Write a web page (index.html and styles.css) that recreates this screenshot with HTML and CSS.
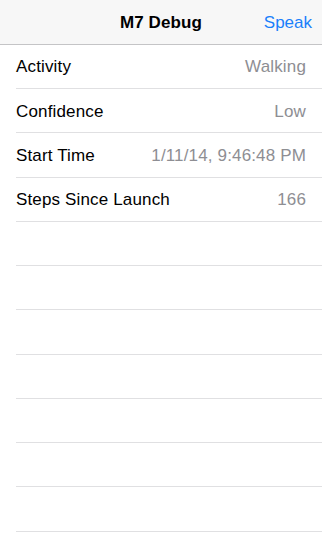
FILE: index.html
```html
<!DOCTYPE html>
<html>
<head>
<meta charset="utf-8">
<link rel="stylesheet" href="styles.css">
</head>
<body>
<div class="screen">
  <header class="navbar">
    <div class="nav-side"></div>
    <div class="nav-title">M7 Debug</div>
    <div class="nav-side nav-right"><span class="nav-btn">Speak</span></div>
  </header>
  <ul class="table">
    <li class="row"><span class="label">Activity</span><span class="value">Walking</span></li>
    <li class="row"><span class="label">Confidence</span><span class="value">Low</span></li>
    <li class="row"><span class="label">Start Time</span><span class="value">1/11/14, 9:46:48 PM</span></li>
    <li class="row"><span class="label">Steps Since Launch</span><span class="value">166</span></li>
    <li class="row"></li>
    <li class="row"></li>
    <li class="row"></li>
    <li class="row"></li>
    <li class="row"></li>
    <li class="row"></li>
    <li class="row"></li>
    <li class="row"></li>
  </ul>
</div>
</body>
</html>
```
FILE: styles.css
```css
* { box-sizing: border-box; }
html, body {
  margin: 0;
  padding: 0;
  background: #ffffff;
  overflow: hidden;
}
body {
  font-family: "Liberation Sans", Arial, sans-serif;
  -webkit-font-smoothing: antialiased;
}
.screen {
  width: 322px;
  height: 551px;
  overflow: hidden;
  background: #ffffff;
}
.navbar {
  height: 44.8px;
  padding-top: 3px;
  background: #f7f7f7;
  border-bottom: 1px solid #c4c4c6;
  display: grid;
  grid-template-columns: 1fr auto 1fr;
  align-items: center;
}
.nav-title {
  font-size: 17px;
  font-weight: bold;
  color: #000000;
  letter-spacing: 0.1px;
}
.nav-right {
  display: flex;
  justify-content: flex-end;
  padding-right: 10px;
}
.nav-btn {
  font-size: 17px;
  color: #1a7ffb;
}
.table {
  list-style: none;
  margin: 0;
  padding: 0 0 0 16px;
}
.row {
  height: 44.28px;
  padding-top: 2px;
  display: flex;
  align-items: center;
  justify-content: space-between;
  padding-right: 16px;
  border-bottom: 1px solid #e0e0e2;
  font-size: 17px;
}
.label {
  color: #000000;
  letter-spacing: 0.15px;
}
.value {
  color: #8e8e93;
  letter-spacing: 0.15px;
}
```
